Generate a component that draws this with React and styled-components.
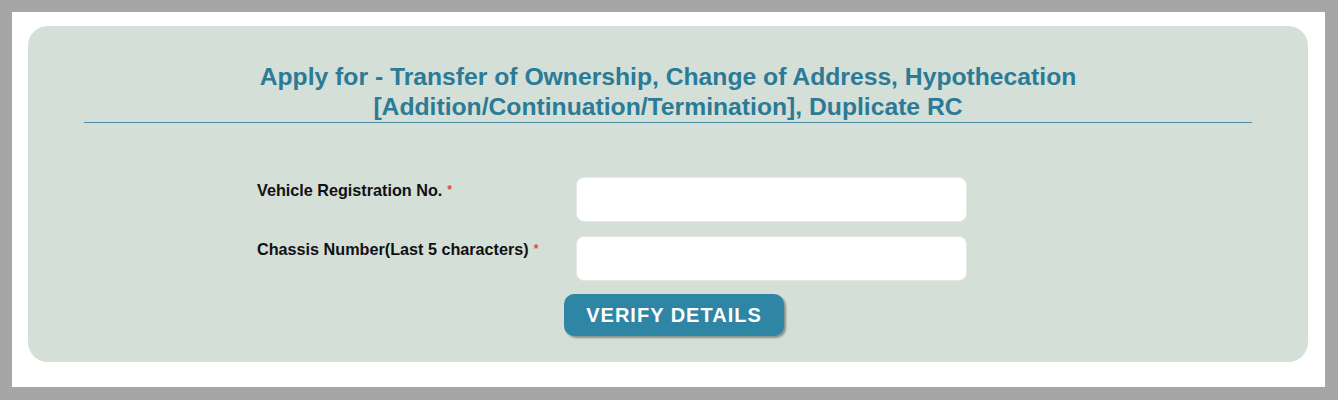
import React from 'react';
import styled, { createGlobalStyle } from 'styled-components';

const GlobalStyle = createGlobalStyle`
    html, body {
        margin: 0;
        padding: 0;
        background: #a6a6a6;
    }
    body {
        font-family: "Liberation Sans", Arial, sans-serif;
    }
`;

const Page = styled.div`
    padding: 12px 13px 13px 12px;
    height: 400px;
    box-sizing: border-box;
`;

const Frame = styled.div`
    background: #ffffff;
    height: 100%;
    box-sizing: border-box;
    padding: 14px 17px 25px 16px;
`;

const Panel = styled.div`
    background: #d4dfd8;
    border-radius: 20px;
    height: 100%;
    box-sizing: border-box;
    padding: 36px 56px 25px 56px;
    display: flex;
    flex-direction: column;
`;

const Title = styled.h2`
    margin: 0;
    font-size: 24.7px;
    line-height: 30px;
    font-weight: bold;
    color: #2b7a96;
    text-align: center;
    border-bottom: 1px solid #4a8ca5;
`;

const Form = styled.div`
    margin-top: 54px;
    padding-left: 173px;
    display: flex;
    flex-direction: column;
    gap: 14px;
`;

const Row = styled.div`
    display: flex;
    align-items: flex-start;
`;

const Label = styled.label`
    width: 319px;
    padding-top: 3px;
    font-size: 16.2px;
    font-weight: bold;
    color: #111;
    line-height: 20px;
`;

const Required = styled.span`
    color: #e24545;
    font-size: 12px;
    margin-left: 5px;
    vertical-align: 2px;
`;

const Input = styled.input`
    width: 391px;
    height: 45px;
    box-sizing: border-box;
    border: 1px solid #e4e9e6;
    border-radius: 8px;
    background: #fff;
    outline: none;
`;

const Actions = styled.div`
    display: flex;
    justify-content: center;
    margin-top: 13px;
    padding-left: 12px;
`;

const Button = styled.button`
    width: 220px;
    height: 42px;
    border: none;
    border-radius: 10px;
    background: #2e85a4;
    color: #fff;
    font-family: "Liberation Sans", Arial, sans-serif;
    font-size: 20px;
    font-weight: bold;
    letter-spacing: 1px;
    box-shadow: 2px 2px 2px rgba(0, 0, 0, 0.35);
    cursor: pointer;
`;

const App = () => {
    return (
        <>
            <GlobalStyle />
            <Page>
                <Frame>
                    <Panel>
                        <Title>
                            Apply for - Transfer of Ownership, Change of Address, Hypothecation
                            <br />
                            [Addition/Continuation/Termination], Duplicate RC
                        </Title>
                        <Form>
                            <Row>
                                <Label>Vehicle Registration No.<Required>*</Required></Label>
                                <Input type="text" />
                            </Row>
                            <Row>
                                <Label>Chassis Number(Last 5 characters)<Required>*</Required></Label>
                                <Input type="text" />
                            </Row>
                        </Form>
                        <Actions>
                            <Button>VERIFY DETAILS</Button>
                        </Actions>
                    </Panel>
                </Frame>
            </Page>
        </>
    );
};

export default App;
